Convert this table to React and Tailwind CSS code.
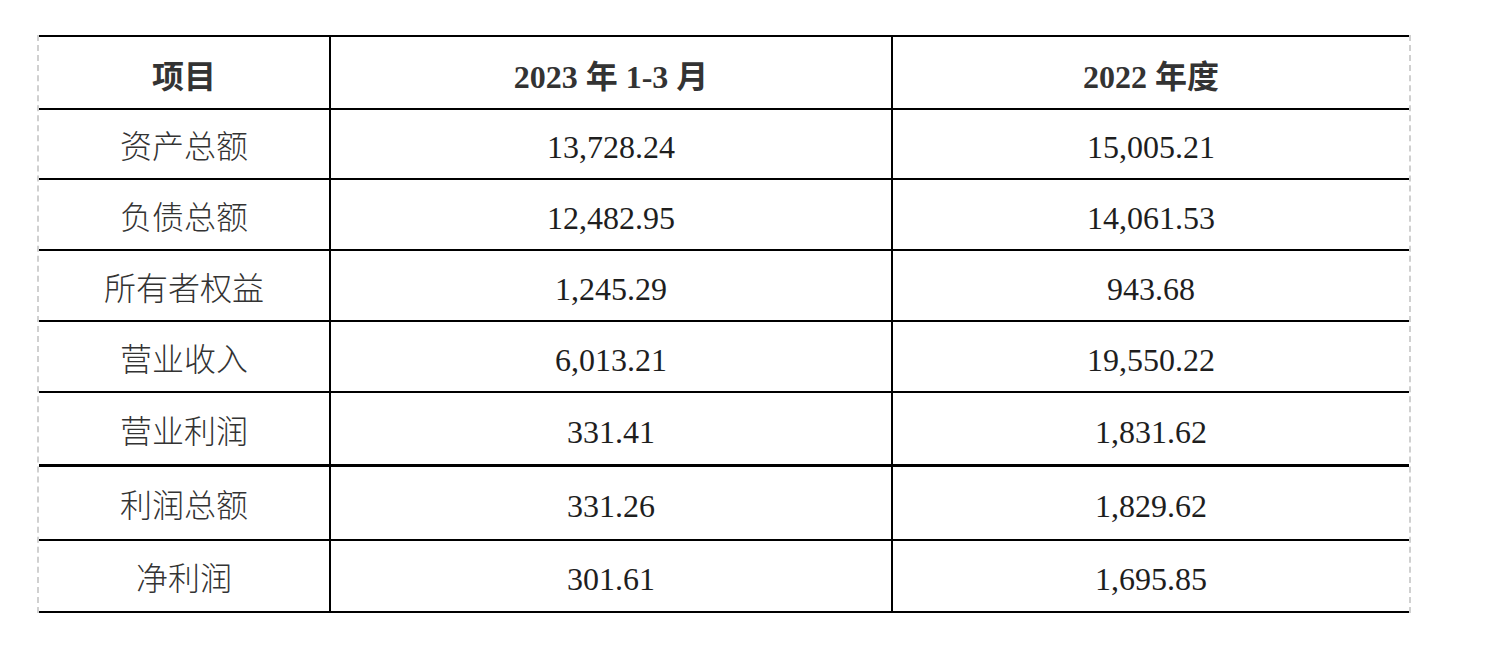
const rows = [
  { name: '资产总额', a: '13,728.24', b: '15,005.21', h: 'h-[70px]' },
  { name: '负债总额', a: '12,482.95', b: '14,061.53', h: 'h-[71px]' },
  { name: '所有者权益', a: '1,245.29', b: '943.68', h: 'h-[71px]' },
  { name: '营业收入', a: '6,013.21', b: '19,550.22', h: 'h-[71px]' },
  { name: '营业利润', a: '331.41', b: '1,831.62', h: 'h-[74px]', thick: true },
  { name: '利润总额', a: '331.26', b: '1,829.62', h: 'h-[74px]' },
  { name: '净利润', a: '301.61', b: '1,695.85', h: 'h-[72px]' },
]

const font = { fontFamily: '"Liberation Serif", "Noto Sans CJK SC", serif' }

function Row({ cells, className, cellClass, firstClass = '' }) {
  return (
    <div className={`flex box-border ${className}`}>
      <div className={`w-[290px] shrink-0 flex items-center justify-center ${cellClass} ${firstClass}`}>{cells[0]}</div>
      <div className={`w-[562px] shrink-0 border-l-2 border-black flex items-center justify-center ${cellClass}`}>{cells[1]}</div>
      <div className={`flex-1 border-l-2 border-black flex items-center justify-center ${cellClass}`}>{cells[2]}</div>
    </div>
  )
}

export default function App() {
  return (
    <div className="w-[1500px] h-[646px] bg-white pt-[35px] pl-[37px]" style={font}>
      <div className="w-[1374px] border-x-2 border-dashed border-[#d0d0d0]">
        <div className="border-t-2 border-black">
          <Row
            cells={['项目', '2023 年 1-3 月', '2022 年度']}
            className="h-[73px] border-b-2 border-black"
            cellClass="pt-2 text-[32px] font-bold text-[#333]"
          />
          {rows.map(r => (
            <Row
              key={r.name}
              cells={[r.name, r.a, r.b]}
              className={`${r.h} border-black ${r.thick ? 'border-b-[3px]' : 'border-b-2'}`}
              cellClass="pt-[6px] text-[32px] text-[#1e1e1e]"
              firstClass="font-light text-[#333]"
            />
          ))}
        </div>
      </div>
    </div>
  )
}
